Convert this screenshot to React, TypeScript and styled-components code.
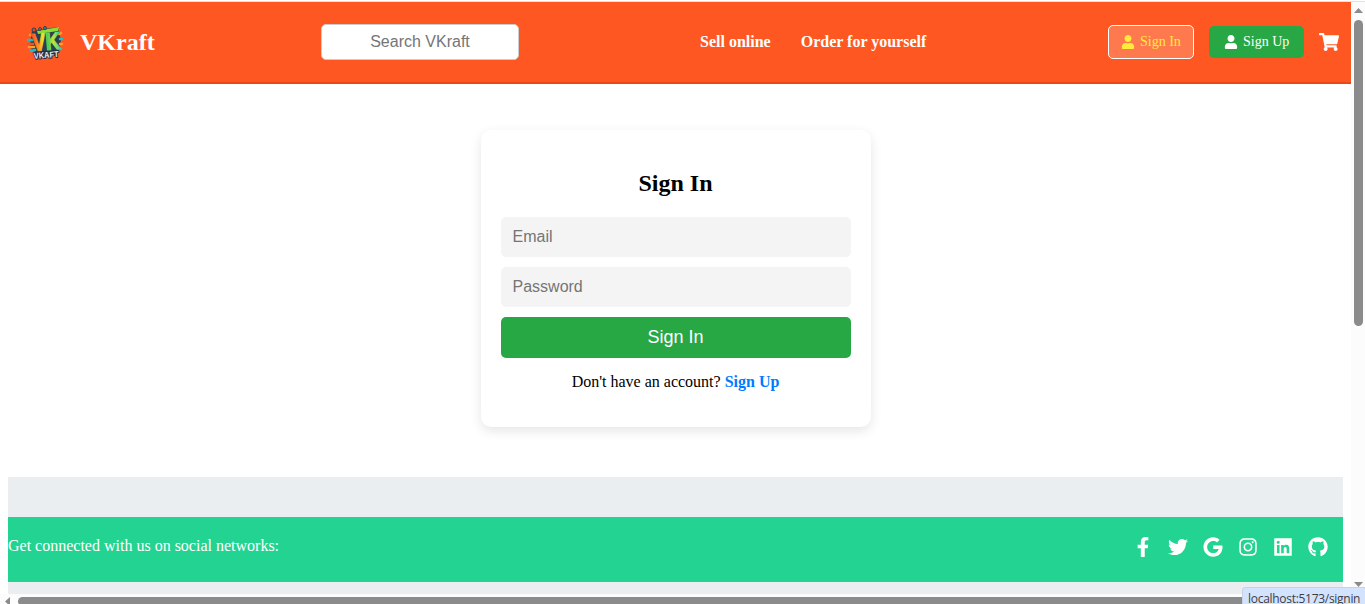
import React from "react";
import styled, { createGlobalStyle } from "styled-components";
import {
  FaUser,
  FaShoppingCart,
  FaFacebookF,
  FaTwitter,
  FaGoogle,
  FaInstagram,
  FaGithub,
} from "react-icons/fa";

const GlobalStyle = createGlobalStyle`
  * { box-sizing: border-box; }
  body {
    margin: 0;
    overflow: hidden;
    background: #fff;
    font-family: "Liberation Serif", "Times New Roman", serif;
    font-size: 16px;
    color: #000;
  }
`;

const Window = styled.div`
  position: relative;
  display: flex;
  flex-direction: column;
  width: 1365px;
  height: 604px;
  overflow: hidden;
`;

const TopEdge = styled.div`
  flex: none;
  height: 2px;
  border-bottom: 1px solid #e2e2e2;
`;

const Content = styled.div`
  display: flex;
  flex: 1;
  min-height: 0;
`;

const Page = styled.div`
  display: flex;
  flex-direction: column;
  width: 1351px;
  height: 602px;
`;

const Header = styled.header`
  display: flex;
  flex: none;
  align-items: center;
  height: 82px;
  padding: 0 12px 0 25px;
  background: #ff5722;
  border-bottom: 2px solid #e64a19;
  color: #fff;
`;

const Brand = styled.div`
  display: flex;
  align-items: center;
  gap: 15px;
  width: 296px;
  font-size: 24px;
  font-weight: bold;
`;

const Search = styled.input`
  width: 198px;
  height: 36px;
  padding: 0 10px;
  border: 1px solid #ccc;
  border-radius: 5px;
  background: #fff;
  font: 16px "Liberation Sans", Arial, sans-serif;
  text-align: center;
  &::placeholder { color: #757575; }
`;

const Nav = styled.nav`
  display: flex;
  gap: 30px;
  margin-left: 181px;
`;

const NavLink = styled.a`
  font-weight: bold;
  white-space: nowrap;
`;

const Actions = styled.div`
  display: flex;
  align-items: center;
  gap: 15px;
  margin-left: auto;
`;

const AuthButton = styled.a<{ $active?: boolean }>`
  display: flex;
  align-items: center;
  gap: 5px;
  width: ${(p) => (p.$active ? 86 : 95)}px;
  height: ${(p) => (p.$active ? 34 : 32)}px;
  padding-left: ${(p) => (p.$active ? 12 : 15)}px;
  border: ${(p) => (p.$active ? "1px solid #fff" : "none")};
  border-radius: 5px;
  background: ${(p) => (p.$active ? "#ff794e" : "#28a745")};
  color: ${(p) => (p.$active ? "#ffeb3b" : "#fff")};
  font-size: 14px;
  white-space: nowrap;
`;

const Main = styled.main`
  display: flex;
  flex: none;
  justify-content: center;
  height: 393px;
  padding-top: 46px;
`;

const Card = styled.form`
  display: flex;
  flex-direction: column;
  width: 390px;
  height: 297px;
  padding: 40px 20px 0;
  border-radius: 10px;
  background: #fff;
  box-shadow: 0 4px 12px rgba(0, 0, 0, 0.1);
`;

const Title = styled.h2`
  margin: 0 0 20px;
  font-size: 24px;
  line-height: 27px;
  text-align: center;
`;

const Field = styled.input`
  flex: none;
  height: 40px;
  margin-bottom: 10px;
  padding: 0 12px;
  border: 0;
  border-radius: 5px;
  background: #f4f4f4;
  font: 16px "Liberation Sans", Arial, sans-serif;
  &::placeholder { color: #757575; }
`;

const Submit = styled.button`
  flex: none;
  height: 41px;
  padding: 0;
  border: 0;
  border-radius: 5px;
  background: #28a745;
  color: #fff;
  font: 18px "Liberation Sans", Arial, sans-serif;
`;

const Prompt = styled.p`
  margin: 15px 0 0;
  line-height: 18px;
  text-align: center;
`;

const PromptLink = styled.a`
  color: #007bff;
  font-weight: bold;
`;

const Footer = styled.footer`
  flex: none;
  height: 117px;
  margin: 0 8px;
  padding-top: 40px;
  background: #eaeef1;
`;

const SocialBar = styled.div`
  display: flex;
  justify-content: space-between;
  height: 65px;
  padding: 20px 15px 0 0;
  background: #22d392;
  color: #fff;
`;

const SocialText = styled.span`
  line-height: 18px;
`;

const SocialIcons = styled.div`
  display: flex;
  gap: 15px;
  height: 20px;
  font-size: 20px;
`;

const HorizontalScrollbar = styled.div`
  display: flex;
  flex: none;
  gap: 8px;
  height: 10px;
  padding: 3px 0 0 4px;
  background: #fcfcfc;
`;

const HorizontalThumb = styled.div`
  width: 1325px;
  height: 9px;
  border-radius: 5px;
  background: #8b8b8b;
`;

const VerticalScrollbar = styled.div`
  display: flex;
  flex-direction: column;
  align-items: center;
  width: 14px;
  height: 602px;
  padding-top: 6px;
  background: #fcfcfc;
`;

const VerticalThumb = styled.div`
  width: 9px;
  height: 306px;
  margin: 7px 0 256px;
  border-radius: 5px;
  background: #8b8b8b;
`;

const Arrow = styled.svg`
  display: block;
  flex: none;
  fill: #8b8b8b;
`;

const StatusBubble = styled.div`
  position: absolute;
  right: 0;
  bottom: 0;
  width: 123px;
  height: 17px;
  padding-left: 5px;
  border: 1px solid #c5d3ea;
  border-width: 1px 0 0 1px;
  border-top-left-radius: 4px;
  background: #d3e3fd;
  color: #3c4043;
  font: 12px/21px "Open Sans", "Noto Sans", sans-serif;
  letter-spacing: -0.29px;
  white-space: nowrap;
`;

const Logo = () => (
  <svg width="40" height="40" viewBox="0 0 40 40">
    <path d="M7 9l26-4 1 5 2 8-2 9-3 6-20 4-2-7-4-5 1-10z" fill="#2a3f50" />
    <g fill="none" strokeWidth="2.6" strokeLinecap="round">
      <path d="M5 13h4M4 25h5" stroke="#ff9d2e" />
      <path d="M3 18h5M6 29l4-1" stroke="#27b9ca" />
      <path d="M34 12l2-1M35 22h2" stroke="#ff9c25" />
      <path d="M35 17h2M34 26l2 1" stroke="#20c2c7" />
      <path d="M3 22h5" stroke="#ee532b" />
    </g>
    <path d="M12 9l22-4-1 4-20 3z" fill="#8edb32" />
    <g fontFamily="Liberation Sans" fontWeight="bold" transform="rotate(-5 20 20)">
      <text x="7" y="28" fontSize="24" textLength="28" lengthAdjust="spacingAndGlyphs" fill="url(#rainbow)" stroke="url(#rainbow)" strokeWidth="1.3">VK</text>
      <text x="7.5" y="36" fontSize="8.5" textLength="25" lengthAdjust="spacingAndGlyphs" fill="#e9edf2" stroke="#1e2b43" strokeWidth="1.8" paintOrder="stroke">VKAFT</text>
    </g>
    <g strokeWidth="1" stroke="#294052">
      <circle cx="9" cy="8" r="2" fill="#dd4d2a" />
      <circle cx="15" cy="7" r="1.4" fill="#e95c2c" />
      <circle cx="20" cy="6" r="1.5" fill="#1b9db3" />
    </g>
    <defs>
      <linearGradient id="rainbow" x1="0" y1="0" x2="1" y2="0">
        <stop offset="0" stopColor="#ff4524" />
        <stop offset=".22" stopColor="#ff961f" />
        <stop offset=".4" stopColor="#f0e52b" />
        <stop offset=".55" stopColor="#45cf60" />
        <stop offset=".75" stopColor="#c6e52c" />
        <stop offset="1" stopColor="#1bcfce" />
      </linearGradient>
    </defs>
  </svg>
);

export default function App() {
  return (
    <Window>
      <GlobalStyle />
      <TopEdge />
      <Content>
        <Page>
          <Header>
            <Brand>
              <Logo />
              <span>VKraft</span>
            </Brand>
            <Search placeholder="Search VKraft" />
            <Nav>
              <NavLink>Sell online</NavLink>
              <NavLink>Order for yourself</NavLink>
            </Nav>
            <Actions>
              <AuthButton $active>
                <FaUser size={14} /> Sign In
              </AuthButton>
              <AuthButton>
                <FaUser size={14} /> Sign Up
              </AuthButton>
              <FaShoppingCart size={20} />
            </Actions>
          </Header>
          <Main>
            <Card>
              <Title>Sign In</Title>
              <Field type="email" placeholder="Email" />
              <Field type="password" placeholder="Password" />
              <Submit type="button">Sign In</Submit>
              <Prompt>
                Don't have an account? <PromptLink>Sign Up</PromptLink>
              </Prompt>
            </Card>
          </Main>
          <Footer>
            <SocialBar>
              <SocialText>Get connected with us on social networks:</SocialText>
              <SocialIcons>
                <FaFacebookF />
                <FaTwitter />
                <FaGoogle />
                <FaInstagram />
                <svg width="20" height="20" viewBox="0 0 448 512" fill="currentColor">
                  <path
                    fillRule="evenodd"
                    d="M0 32h448v448H0zM69 202v213h66V202zM102 96a38.500 38.500 0 1 0 0 77 38.500 38.500 0 0 0 0-77zM177 202v213h66V310c0-28 5-55 40-55s35 32 35 57v103h66V298c0-57-12-101-79-101-32 0-54 18-63 34h-1v-29z"
                  />
                </svg>
                <FaGithub />
              </SocialIcons>
            </SocialBar>
          </Footer>
          <HorizontalScrollbar>
            <Arrow width="6" height="9" viewBox="0 0 6 9">
              <path d="M6 0v9L1 4.5z" />
            </Arrow>
            <HorizontalThumb />
          </HorizontalScrollbar>
        </Page>
        <VerticalScrollbar>
          <Arrow width="9" height="5" viewBox="0 0 9 5">
            <path d="M0 5h9L4.500 0z" />
          </Arrow>
          <VerticalThumb />
          <Arrow width="9" height="5" viewBox="0 0 9 5">
            <path d="M0 0h9L4.500 5z" />
          </Arrow>
        </VerticalScrollbar>
      </Content>
      <StatusBubble>localhost:5173/signin</StatusBubble>
    </Window>
  );
}
